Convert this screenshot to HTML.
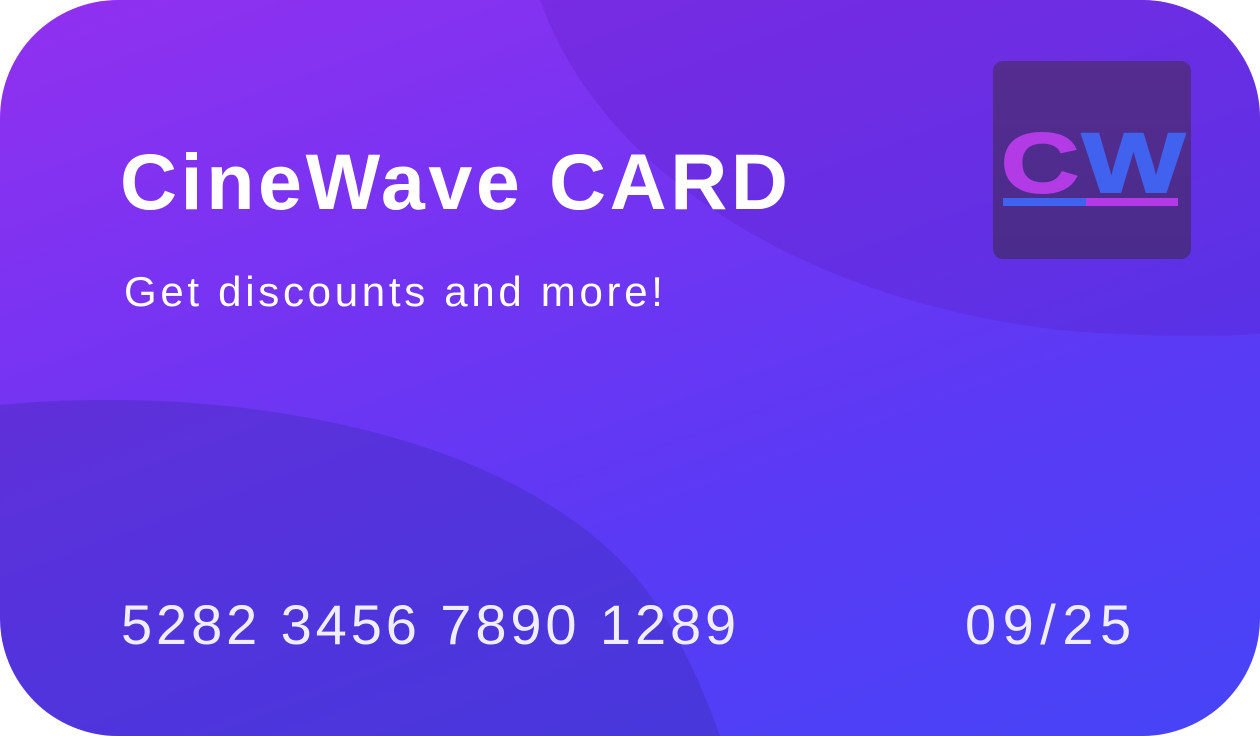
<!DOCTYPE html>
<html><head><style>
html,body{margin:0;padding:0;background:#fff;width:1260px;height:736px;overflow:hidden}
.card{position:absolute;left:0;top:0;width:1260px;height:736px;border-radius:118px;overflow:hidden;background:linear-gradient(160deg,#9230f0 0%,#7434f2 35%,#5a3af5 65%,#4644f6 100%);font-family:"Liberation Sans",sans-serif;color:#fff}
svg.bg{position:absolute;left:0;top:0}
.t{position:absolute;left:120px;top:136px;font-size:79px;font-weight:bold;letter-spacing:3.6px;white-space:nowrap}
.s{position:absolute;left:124px;top:268px;font-size:42px;letter-spacing:3.7px;white-space:nowrap}
.n{position:absolute;left:121px;top:592px;font-size:56px;letter-spacing:3.9px;color:#f0eefc;white-space:nowrap}
.d{position:absolute;left:965px;top:592px;font-size:56px;letter-spacing:6.5px;color:#f0eefc}
.logo{position:absolute;left:993px;top:61px;width:198px;height:198px;border-radius:10px;background:linear-gradient(#552c90,#4a2c8c)}
</style></head><body>
<div class="card">
<svg class="bg" width="1260" height="736">
<path d="M540 0 C600 170 800 300 1060 330 C1150 338 1220 336 1260 334 L1260 0 Z" fill="#5a1ec0" opacity="0.28"/>
<path d="M0 405 C200 385 480 420 620 560 C670 610 700 680 720 736 L0 736 Z" fill="#3a2ab0" opacity="0.35"/>
</svg>
<div class="t">CineWave CARD</div>
<div class="s">Get discounts and more!</div>
<div class="logo">
<svg width="198" height="198" style="position:absolute;left:0;top:0">
<text x="8" y="131" font-family="Liberation Sans" font-weight="bold" font-size="84" fill="#b23be6" stroke="#b23be6" stroke-width="2" textLength="78" lengthAdjust="spacingAndGlyphs">C</text>
<text x="89" y="131" font-family="Liberation Sans" font-weight="bold" font-size="84" fill="#4062ee" stroke="#4062ee" stroke-width="2" textLength="103" lengthAdjust="spacingAndGlyphs">W</text>
<rect x="10" y="137" width="83" height="8" fill="#4062ee"/>
<rect x="93" y="137" width="92" height="8" fill="#b23be6"/>
</svg>
</div>
<div class="n">5282 3456 7890 1289</div>
<div class="d">09/25</div>
</div>
</body></html>
